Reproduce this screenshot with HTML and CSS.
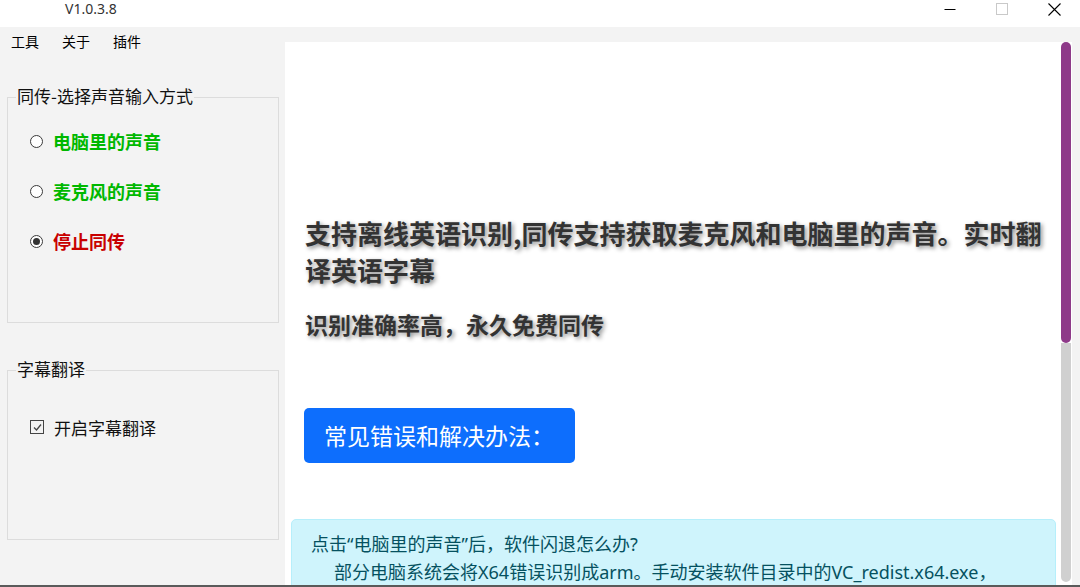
FILE: index.html
```html
<!DOCTYPE html>
<html lang="zh-CN">
<head>
  <meta charset="UTF-8">
  <meta name="viewport" content="width=device-width, initial-scale=1.0">
  <title>V1.0.3.8</title>
  <link rel="stylesheet" href="styles.css">
</head>
<body>
  <div class="window">
    <div class="titlebar">
      <span class="title">V1.0.3.8</span>
      <div class="controls">
        <span class="ctl">
          <svg width="12" height="12" viewBox="0 0 12 12"><path d="M0.5 6.5H11.5" stroke="#000" stroke-width="1"/></svg>
        </span>
        <span class="ctl">
          <svg width="12" height="12" viewBox="0 0 12 12"><rect x="0.5" y="0.5" width="11" height="11" fill="none" stroke="#c9c9c9" stroke-width="1"/></svg>
        </span>
        <span class="ctl">
          <svg width="13" height="13" viewBox="0 0 13 13"><path d="M0.5 0.5L12.5 12.5M12.5 0.5L0.5 12.5" stroke="#000" stroke-width="1.1"/></svg>
        </span>
      </div>
    </div>

    <div class="main">
      <div class="side">
        <nav class="menu">
          <span>工具</span>
          <span>关于</span>
          <span>插件</span>
        </nav>

        <fieldset class="group group-source">
          <legend>同传-选择声音输入方式</legend>
          <label class="opt green"><span class="radio"></span>电脑里的声音</label>
          <label class="opt green"><span class="radio"></span>麦克风的声音</label>
          <label class="opt red"><span class="radio checked"></span>停止同传</label>
        </fieldset>

        <fieldset class="group group-sub">
          <legend>字幕翻译</legend>
          <label class="opt plain">
            <span class="check">
              <svg width="11" height="11" viewBox="0 0 11 11"><path d="M2 5.5L4.5 8L9 2.5" fill="none" stroke="#444" stroke-width="1.3"/></svg>
            </span>开启字幕翻译
          </label>
        </fieldset>
      </div>

      <div class="view">
        <div class="page">
          <h1>支持离线英语识别,同传支持获取麦克风和电脑里的声音。实时翻译英语字幕</h1>
          <p class="lead">识别准确率高，永久免费同传</p>
          <a class="btn">常见错误和解决办法：</a>
          <div class="alert">
            <div class="q">点击“电脑里的声音”后，软件闪退怎么办?</div>
            <div class="a">部分电脑系统会将X64错误识别成arm。手动安装软件目录中的VC_redist.x64.exe，</div>
          </div>
        </div>
        <div class="scrollbar">
          <div class="thumb"></div>
          <div class="track"></div>
        </div>
      </div>
    </div>
    <div class="bottom-line"></div>
  </div>
</body>
</html>
```

FILE: styles.css
```css
body {
  margin: 0;
  padding: 0;
  background-color: #f3f3f3;
  font-family: "Noto Sans CJK SC", "Microsoft YaHei", sans-serif;
  color: #111;
  overflow: hidden;
}

.window {
  width: 1080px;
  height: 587px;
  display: flex;
  flex-direction: column;
}

/* title bar */
.titlebar {
  height: 27px;
  flex: none;
  background-color: #fff;
  display: flex;
  justify-content: space-between;
  align-items: flex-start;
}

.title {
  margin-left: 65px;
  height: 18px;
  line-height: 18px;
  font-family: "Noto Sans", "Noto Sans CJK SC", sans-serif;
  font-size: 14px;
  color: #333;
}

.controls {
  display: flex;
}

.ctl {
  width: 52px;
  height: 18px;
  display: flex;
  align-items: center;
  justify-content: center;
}

/* main area */
.main {
  flex: 1;
  display: flex;
  min-height: 0;
}

.side {
  width: 285px;
  flex: none;
}

.menu {
  display: flex;
  gap: 23px;
  padding-left: 11px;
  height: 29px;
  line-height: 29px;
  font-size: 14px;
  color: #000;
}

.group {
  margin: 0 0 0 7px;
  width: 272px;
  box-sizing: border-box;
  border: 1px solid #dcdcdc;
  padding: 0 0 0 22px;
  display: flex;
  flex-direction: column;
  align-items: flex-start;
}

.group legend {
  margin-left: -14px;
  padding: 0 1px;
  font-size: 17px;
  line-height: 20px;
  color: #111;
  position: relative;
  top: -1px;
}

.group-source {
  margin-top: 31px;
  height: 236px;
  padding-top: 22px;
  gap: 26px;
}

.group-sub {
  margin-top: 37px;
  height: 180px;
  padding-top: 35px;
}

.opt {
  display: flex;
  align-items: center;
  gap: 10px;
  height: 24px;
  font-size: 18px;
  font-weight: bold;
}

.opt.green {
  color: #00b800;
}

.opt.red {
  color: #c80000;
}

.opt.plain {
  font-size: 17px;
  font-weight: normal;
  color: #111;
}

.radio {
  width: 13px;
  height: 13px;
  box-sizing: border-box;
  border: 1px solid #3a3a3a;
  border-radius: 50%;
  background-color: #fff;
  display: flex;
  align-items: center;
  justify-content: center;
}

.radio.checked::after {
  content: "";
  width: 7px;
  height: 7px;
  border-radius: 50%;
  background-color: #333;
}

.check {
  width: 14px;
  height: 14px;
  box-sizing: border-box;
  border: 1px solid #444;
  display: flex;
  align-items: center;
  justify-content: center;
}

/* right web view */
.view {
  flex: 1;
  margin-top: 15px;
  margin-right: 8px;
  display: flex;
  min-height: 0;
}

.page {
  flex: 1;
  background-color: #fff;
  overflow: hidden;
}

h1 {
  margin: 172px 0 0 20px;
  font-size: 26px;
  line-height: 37px;
  font-weight: bold;
  color: #333;
  text-shadow: 2px 2px 4px rgba(0, 0, 0, 0.45);
}

.lead {
  margin: 20px 0 0 20px;
  font-size: 23px;
  line-height: 32px;
  font-weight: bold;
  color: #333;
  text-shadow: 2px 2px 4px rgba(0, 0, 0, 0.45);
}

.btn {
  display: inline-block;
  margin: 68px 0 0 19px;
  height: 55px;
  line-height: 55px;
  padding: 0 21px 0 20px;
  background-color: #0d6efd;
  color: #fff;
  font-size: 23px;
  border-radius: 5px;
}

.alert {
  margin: 56px 5px 0 6px;
  padding: 10px 19px 0;
  background-color: #cff4fc;
  border: 1px solid #b6effb;
  border-radius: 5px;
  color: #055160;
  font-family: "Noto Sans", "Noto Sans CJK SC", sans-serif;
  font-size: 18px;
  line-height: 28px;
  height: 120px;
}

.alert .a {
  text-indent: 23px;
  white-space: nowrap;
}

.scrollbar {
  width: 11px;
  flex: none;
  background-color: #fff;
  display: flex;
  flex-direction: column;
}

.thumb {
  height: 301px;
  width: 10px;
  border-radius: 5px;
  background-color: #8e3a89;
}

.track {
  flex: 1;
  width: 10px;
  margin-bottom: 3px;
  border-radius: 0 0 5px 5px;
  background-color: #d0d0d0;
}

.bottom-line {
  height: 2px;
  flex: none;
  background-color: #5a5a5a;
}
```
